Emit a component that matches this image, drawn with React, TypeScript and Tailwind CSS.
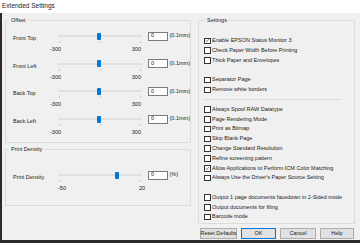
const font = { fontFamily: '"Liberation Sans", Arial, sans-serif' };

function SliderRow({
  label,
  value,
  unit,
  min,
  max,
  pos,
  ticks,
  scalePad,
}: {
  label: string;
  value: string;
  unit: string;
  min: string;
  max: string;
  pos: number;
  ticks: number;
  scalePad: string;
}) {
  return (
    <div className="flex h-[27.7px] items-start">
      <div className="w-[52px] whitespace-nowrap pl-[7px] pt-[2px] text-[5.5px] leading-[10px]">{label}</div>
      <div className="flex w-[84px] flex-col">
        <div className="relative flex h-[10px] items-center">
          <div className="h-[2px] w-full bg-[#e0e0e0]" />
          <div
            className="absolute top-[1.5px] h-[7px] w-[3.5px] rounded-[1px] bg-[#0078d7]"
            style={{ left: `${pos}%`, marginLeft: '-1.75px' }}
          />
        </div>
        <div className="flex h-[3px] justify-between px-[1px]">
          {Array.from({ length: ticks }).map((_, i) => (
            <div key={i} className="h-[2px] w-[1px] bg-[#c8c8c8]" />
          ))}
        </div>
        <div className={`mt-[1px] flex justify-between text-[5.5px] leading-[8px] ${scalePad}`}>
          <span>{min}</span>
          <span>{max}</span>
        </div>
      </div>
      <div className="ml-[6px] flex h-[10px] items-center">
        <div className="flex h-[9px] w-[20px] items-center border border-[#7a7a7a] bg-white pl-[2px] text-[5.5px] leading-none">
          {value}
        </div>
        <span className="ml-[1.5px] whitespace-nowrap text-[5.5px] leading-none">{unit}</span>
      </div>
    </div>
  );
}

function Check({ label, checked }: { label?: string; checked?: boolean }) {
  return (
    <div className="flex h-[9.8px] items-center">
      {label !== undefined && (
        <>
          <div className="flex h-[6.5px] w-[6.5px] shrink-0 items-center justify-center border border-[#333] bg-white">
            {checked && (
              <svg viewBox="0 0 6 6" className="h-[5px] w-[5px]">
                <polyline points="0.8,3 2.3,4.6 5.2,1.2" fill="none" stroke="#222" strokeWidth="0.8" />
              </svg>
            )}
          </div>
          <span className="ml-[1.5px] whitespace-nowrap text-[5.5px] leading-none">{label}</span>
        </>
      )}
    </div>
  );
}

function Button({ label, w, primary }: { label: string; w: string; primary?: boolean }) {
  return (
    <div
      className={`flex h-[11px] items-center justify-center whitespace-nowrap border bg-[#e1e1e1] text-[5.5px] leading-none ${w} ${
        primary ? 'border-[#0078d7]' : 'border-[#adadad]'
      }`}
    >
      {label}
    </div>
  );
}

export default function App() {
  return (
    <div className="h-[243px] w-[360px] overflow-hidden bg-[#f0f0f0] text-[#1a1a1a]" style={font}>
      {/* Title bar */}
      <div className="flex h-[13px] items-center bg-white pl-[2px] text-[6.5px] leading-none">Extended Settings</div>

      {/* Body */}
      <div className="flex h-[230px] flex-col border-b-[3px] border-l-2 border-[#2b2b2b] pl-[3px] pr-[5px] pt-[4px]">
        <div className="flex h-[207px] gap-[7px]">
          {/* Left column */}
          <div className="flex w-[190px] flex-col gap-[3px]">
            <fieldset className="h-[126px] border border-[#dcdcdc]">
              <legend className="ml-[3px] px-[2px] text-[5.5px] leading-[6px]">Offset</legend>
              <div className="mt-[8px]">
                <SliderRow label="Front Top" value="0" unit="(0.1mm)" min="-300" max="300" pos={49} ticks={3} scalePad="-ml-[8px] pr-[1px]" />
                <SliderRow label="Front Left" value="0" unit="(0.1mm)" min="-300" max="300" pos={49} ticks={3} scalePad="-ml-[8px] pr-[1px]" />
                <SliderRow label="Back Top" value="0" unit="(0.1mm)" min="-300" max="300" pos={49} ticks={3} scalePad="-ml-[8px] pr-[1px]" />
                <SliderRow label="Back Left" value="0" unit="(0.1mm)" min="-300" max="300" pos={49} ticks={3} scalePad="-ml-[8px] pr-[1px]" />
              </div>
            </fieldset>
            <fieldset className="h-[60px] border border-[#dcdcdc]">
              <legend className="ml-[3px] px-[2px] text-[5.5px] leading-[6px]">Print Density</legend>
              <div className="mt-[18px]">
                <SliderRow label="Print Density" value="0" unit="(%)" min="-50" max="20" pos={70} ticks={2} scalePad="-mr-[3px]" />
              </div>
            </fieldset>
          </div>

          {/* Settings */}
          <fieldset className="h-[207px] w-[153px] border border-[#dcdcdc] pl-[5px] pr-[12px]">
            <legend className="ml-[2px] px-[1px] text-[5.5px] leading-[6px]">Settings</legend>
            <div className="mt-[13px]">
              <Check label="Enable EPSON Status Monitor 3" checked />
              <Check label="Check Paper Width Before Printing" />
              <Check label="Thick Paper and Envelopes" />
              <Check />
              <Check label="Separator Page" />
              <Check label="Remove white borders" />
              <div className="flex h-[9.8px] items-center">
                <div className="h-[1px] w-full bg-[#dcdcdc]" />
              </div>
              <Check label="Always Spool RAW Datatype" />
              <Check label="Page Rendering Mode" />
              <Check label="Print as Bitmap" />
              <Check label="Skip Blank Page" />
              <Check label="Change Standard Resolution" />
              <Check label="Refine screening pattern" />
              <Check label="Allow Applications to Perform ICM Color Matching" checked />
              <Check label="Always Use the Driver's Paper Source Setting" />
              <Check />
              <Check label="Output 1 page documents facedown in 2-Sided mode" />
              <Check label="Output documents for filing" />
              <Check label="Barcode mode" />
            </div>
          </fieldset>
        </div>

        {/* Buttons */}
        <div className="mt-[4px] flex justify-end gap-[4px] pr-[1px]">
          <Button label="Reset Defaults" w="w-[37px]" />
          <Button label="OK" w="w-[35px]" primary />
          <Button label="Cancel" w="w-[36px]" />
          <Button label="Help" w="w-[34px]" />
        </div>
      </div>
    </div>
  );
}
